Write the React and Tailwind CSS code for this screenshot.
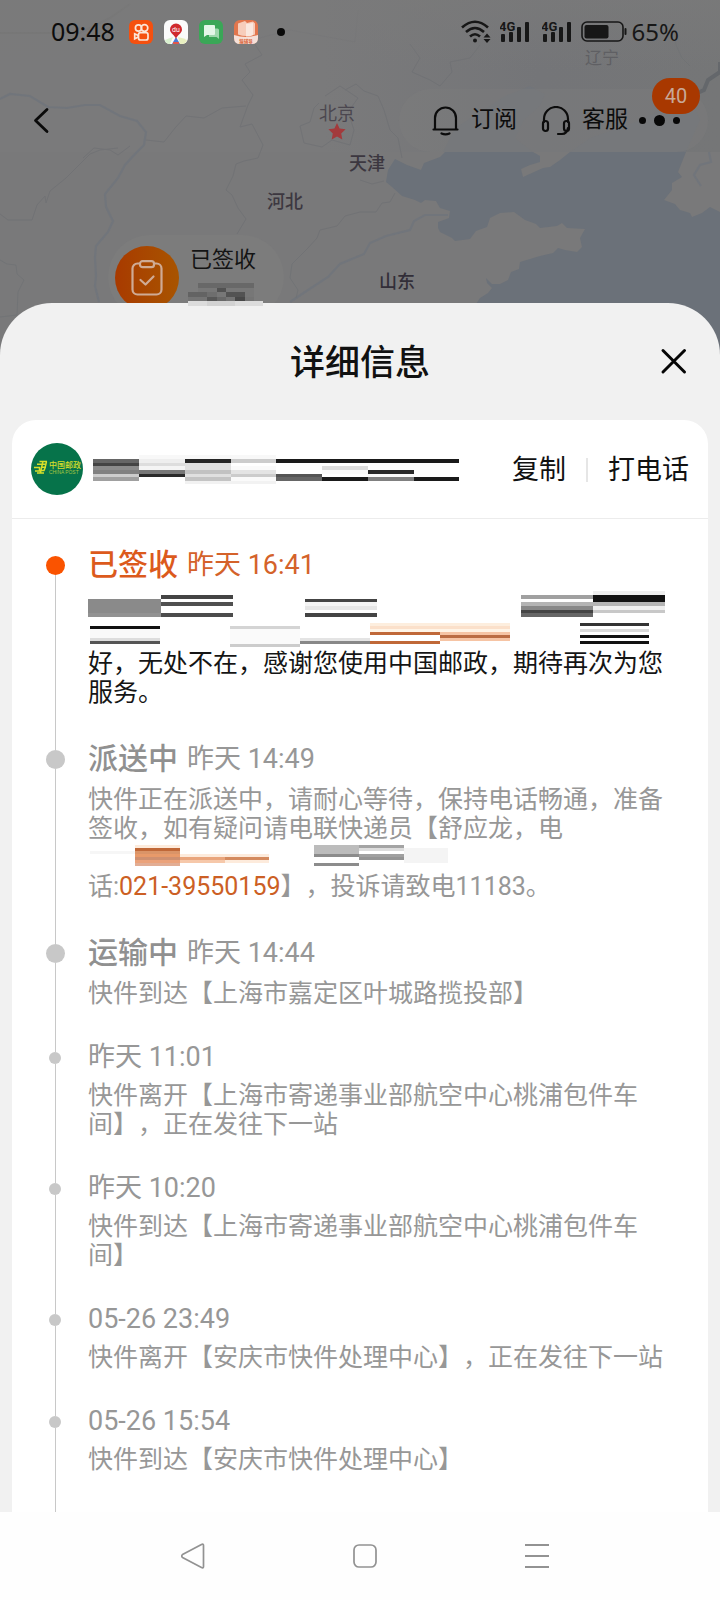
import React from "react";

const HEADER_MOSAIC = [
  [0, 4, 46, 4, "#666"], [0, 8, 46, 3, "#444"], [0, 11, 46, 4, "#8c8c8c"], [0, 15, 46, 4, "#808080"], [0, 19, 46, 3, "#ccc"], [0, 22, 46, 4, "#a0a0a0"],
  [46, 0, 137, 4, "#f8f8f8"], [46, 4, 46, 4, "#eee"], [46, 8, 46, 3, "#ddd"], [46, 11, 46, 4, "#f4f4f4"], [46, 15, 46, 4, "#777"], [46, 19, 46, 3, "#2a2a2a"],
  [92, 4, 46, 4, "#262626"], [92, 8, 46, 7, "#e0e0e0"], [92, 15, 46, 4, "#c2c2c2"], [92, 19, 46, 3, "#e0e0e0"], [92, 22, 46, 4, "#c4c4c4"], [92, 26, 46, 3, "#f2f2f2"],
  [138, 4, 45, 4, "#ccc"], [138, 11, 45, 4, "#fafafa"], [138, 15, 45, 4, "#e4e4e4"], [138, 19, 45, 3, "#ccc"], [138, 22, 45, 4, "#fafafa"], [138, 26, 45, 3, "#f2f2f2"],
  [183, 4, 183, 4, "#1a1a1a"], [183, 19, 46, 3, "#555"], [183, 22, 46, 4, "#666"],
  [229, 11, 46, 4, "#ddd"], [229, 15, 46, 4, "#fafafa"], [229, 22, 46, 4, "#1a1a1a"],
  [275, 15, 46, 4, "#2a2a2a"], [275, 19, 46, 3, "#fafafa"], [275, 22, 46, 4, "#808080"], [321, 22, 45, 4, "#1a1a1a"],
];

const SIGNED_MOSAIC = [
  [0, 8, 73, 14, "#8a8a8a"], [0, 22, 73, 4, "#929292"],
  [73, 4, 72, 4, "#444"], [73, 11, 72, 4, "#505050"], [73, 22, 72, 4, "#4c4c4c"],
  [217, 8, 72, 3, "#444"], [217, 11, 72, 4, "#f4f4f4"], [217, 15, 72, 4, "#e6e6e6"], [217, 22, 72, 4, "#444"],
  [433, 4, 72, 4, "#a0a0a0"], [433, 11, 72, 4, "#b4b4b4"], [433, 15, 72, 4, "#888"], [433, 19, 72, 3, "#444"], [433, 22, 72, 4, "#666"],
  [505, 0, 72, 4, "#eee"], [505, 4, 72, 7, "#111"], [505, 11, 72, 4, "#b4b4b4"], [505, 15, 72, 4, "#eee"], [505, 19, 72, 3, "#c8c8c8"],
  [2, 35, 70, 3, "#111"], [2, 38, 70, 9, "#f9f9f9"], [2, 47, 70, 3, "#ddd"], [2, 50, 70, 3, "#555"],
  [142, 35, 70, 3, "#d4d4d4"], [142, 38, 70, 15, "#fafafa"], [142, 53, 70, 3, "#ccc"],
  [212, 47, 70, 3, "#e4e4e4"], [212, 50, 70, 3, "#888"],
  [282, 32, 140, 3, "#fdeede"], [282, 35, 140, 3, "#fbe0ca"], [282, 38, 140, 3, "#fff4e6"],
  [282, 41, 70, 3, "#c06838"], [282, 50, 70, 3, "#c06838"],
  [352, 41, 70, 3, "#f6c4a4"], [352, 44, 70, 3, "#bb6c42"], [352, 47, 70, 3, "#f6c4a4"],
  [492, 32, 69, 3, "#333"], [492, 38, 69, 3, "#dadada"], [492, 44, 69, 3, "#111"], [492, 50, 69, 3, "#111"],
];

const COURIER_MOSAIC = [
  [2, 8, 45, 3, "#f6f6f6"],
  [47, 2, 45, 3, "#fdebdc"], [47, 5, 45, 3, "#c06838"], [47, 8, 45, 3, "#da9468"], [47, 11, 45, 3, "#e89a6a"], [47, 14, 45, 3, "#cf9070"], [47, 17, 45, 3, "#eba27a"], [47, 20, 45, 3, "#e2ad94"],
  [92, 11, 45, 3, "#fdebdc"], [92, 14, 45, 3, "#e9a57c"], [92, 17, 45, 3, "#f6c8aa"], [137, 11, 44, 9, "#fdebdc"], [137, 14, 44, 3, "#d48a5e"],
  [226, 2, 45, 9, "#bcbcbc"], [226, 11, 45, 3, "#8c8c8c"], [226, 20, 45, 3, "#8c8c8c"],
  [271, 2, 45, 3, "#a4a4a4"], [271, 5, 45, 3, "#ddd"], [271, 11, 45, 3, "#a0a0a0"], [271, 14, 45, 3, "#949494"],
  [316, 5, 44, 15, "#f4f4f4"],
];

const STATUS_MOSAIC = [
  [10, 0, 56, 5, "#686868"], [10, 5, 56, 4, "#777"], [29, 5, 9, 4, "#525252"],
  [0, 9, 66, 5, "#636363"], [19, 9, 10, 5, "#6e6e6e"], [29, 9, 9, 5, "#777"], [38, 9, 19, 5, "#535353"], [57, 9, 9, 5, "#777"],
  [0, 14, 66, 4, "#747474"], [19, 14, 10, 4, "#575757"], [29, 14, 9, 4, "#686868"], [47, 14, 10, 4, "#484848"],
  [0, 18, 75, 5, "#dcdcdc"], [19, 18, 28, 5, "#d2d2d2"],
];

function Mosaic({ cells, width, height, className = "" }) {
  return (
    <svg width={width} height={height} viewBox={`0 0 ${width} ${height}`} shapeRendering="crispEdges" className={`block max-w-full ${className}`} aria-hidden="true">
      {cells.map(([x, y, w, h, fill], i) => (
        <rect key={i} x={x} y={y} width={w} height={h} fill={fill} />
      ))}
    </svg>
  );
}

function MapBackdrop() {
  return (
    <div className="absolute inset-x-0 top-0 h-[360px] overflow-hidden bg-[#79797a]">
      <svg viewBox="0 0 720 360" preserveAspectRatio="xMidYMin slice" className="h-full w-full" aria-hidden="true">
        <defs>
          <linearGradient id="land" x1="0" y1="0" x2="1" y2="0">
            <stop offset="0.45" stopColor="#7a7a7b" />
            <stop offset="0.75" stopColor="#747578" />
            <stop offset="1" stopColor="#757677" />
          </linearGradient>
          <linearGradient id="fade" x1="0" y1="0" x2="0" y2="1">
            <stop offset="0" stopColor="#7a7a7a" />
            <stop offset="1" stopColor="#7a7a7a" stopOpacity="0" />
          </linearGradient>
        </defs>
        <rect width="720" height="360" fill="#79797a" />
        <rect width="720" height="152" fill="url(#land)" />
        <path fill="#6b7179" d="M445 152 440 157 424 163 421 170 407 165 395 159 388 170 386 182 392 187 402 196 415 200 421 203 425 200 436 201 440 208 450 211 449 218 438 222 438 228 440 232 452 238 455 241 470 239 476 231 487 227 490 218 500 213 514 212 525 220 536 224 540 228 557 226 562 223 567 228 585 229 580 238 582 247 577 252 565 250 558 248 553 253 540 256 520 262 519 269 511 272 508 280 500 284 492 284 486 278 487 283 492 288 488 293 480 298 476 304 470 320 440 360 720 360 720 212 710 207 702 213 692 217 690 213 680 210 675 204 664 200 672 190 672 183 682 177 678 172 686 152 570 152 560 160 550 167 543 168 523 177 521 169 530 165 540 162 540 156 533 152Z" />
        <path fill="#72757a" d="M443 152 455 128 480 112 505 96 530 86 545 94 540 106 524 120 515 138 533 152ZM570 152 590 138 640 120 690 96 700 120 686 152Z" />
        <g fill="none" stroke="#6d747c" strokeWidth="2.200" opacity=".7">
          <path d="M0 99 10 94 30 96 48 107 67 108 85 105 100 105 120 116 137 121 146 132 144 145 136 153 125 165 118 178 105 194 106 207 113 221 108 232 96 246 95 258 96 276 95 286 99 302" />
          <path d="M448 215 425 215 414 221 410 230 386 236 370 243 364 254 340 264 328 277 305 292 290 302" />
          <path d="M709 152 711 162 700 165 694 175 701 186" />
        </g>
        <path d="M720 62V72L708 80 704 90 695 94" fill="none" stroke="#64676b" strokeWidth="4" />
        <g fill="none" stroke="#6d6f73" strokeWidth="1" opacity=".6">
          <path d="M146 140 164 142 175 128 186 116 204 118 222 108 246 106" />
          <path d="M0 214 8 220 32 220 37 205 45 196 46 203 50 191 66 178 82 162 90 154 100 150 118 148" />
          <path d="M83 158 94 148 110 150 118 155 130 146" />
          <path d="M252 40 262 55 245 64 250 72 242 80 253 95 248 105 240 127 252 124 263 145 258 158 244 161 236 164 233 176 226 190 232 195 238 208 246 219 237 234" />
          <path d="M319 103 314 108 310 122 300 126 304 143 322 147 332 140 350 145 354 130 348 112 358 98 340 86 325 96" />
          <path d="M345 90 356 84 364 91 378 96 384 110 390 130 398 138 402 158" />
          <path d="M360 212 376 212 382 203 390 202 395 193M360 180 372 184 384 181" />
          <path d="M410 44 420 58 412 72 430 80 440 86 452 72 450 62 470 58 480 45" />
          <path d="M0 260 7 264 16 265 17 274 24 280 18 292 17 315 0 317" />
          <path d="M360 212 345 216 337 226 320 230 317 238 308 248 292 264 290 278 298 290 296 298" />
          <path d="M690 66 682 58 676 45 674 30" />
          <path d="M252 40 290 30 355 42 358 10" opacity=".4" />
        </g>
        <path d="M0 33H80L110 18 130 4" fill="none" stroke="#727272" strokeWidth="2" opacity=".6" />
        <path fill="#a33a3c" d="m337 123 2.600 5.500 6 .8-4.400 4.200 1.100 6-5.300-2.900-5.300 2.900 1.100-6-4.400-4.200 6-.8z" />
        <rect width="720" height="70" fill="url(#fade)" opacity=".7" />
      </svg>
      <span className="absolute left-[585px] top-[47px] text-[17px] leading-[22px] text-[#5f5f63]">辽宁</span>
      <span className="absolute left-[319px] top-[103px] text-[18px] leading-[22px] text-[#4b474f]">北京</span>
      <span className="absolute left-[349px] top-[153px] text-[18px] font-medium leading-[22px] text-[#3c3740]">天津</span>
      <span className="absolute left-[267px] top-[191px] text-[18px] font-medium leading-[22px] text-[#3c3740]">河北</span>
      <span className="absolute left-[379px] top-[271px] text-[18px] font-medium leading-[22px] text-[#322e38]">山东</span>
    </div>
  );
}

function Signal() {
  return (
    <svg width="30" height="24" viewBox="0 0 30 24" fill="#171717" aria-hidden="true">
      <text x="-1" y="10.500" fontSize="13" fontWeight="700" fontFamily="Roboto, sans-serif">4G</text>
      <rect x="1" y="14" width="4" height="8" rx="1" />
      <rect x="9" y="12" width="4" height="10" rx="1" />
      <rect x="17" y="7" width="4" height="15" rx="1" />
      <rect x="25" y="2" width="4" height="20" rx="1" />
    </svg>
  );
}

function StatusBar() {
  return (
    <div className="flex h-16 items-center pl-[51px] pr-[41px] font-['Noto_Sans',sans-serif] text-[25px] text-[#0c0c0c]">
      <span>09:48</span>
      <div className="ml-[14px] flex items-center gap-[11px]">
        <svg width="24" height="24" viewBox="0 0 24 24" fill="none" stroke="#fbe6da" strokeWidth="1.700" aria-hidden="true">
          <rect width="24" height="24" rx="6" fill="#f5500f" stroke="none" />
          <circle cx="9.500" cy="8" r="3.100" />
          <circle cx="15.500" cy="8" r="3.300" />
          <rect x="9.500" y="12.700" width="9.500" height="7.300" rx="2" />
          <path d="M9.300 15.500 5.700 13.800v5l3.600-1.700" />
        </svg>
        <svg width="24" height="24" viewBox="0 0 24 24" aria-hidden="true">
          <rect width="24" height="24" rx="6" fill="#fbfbfb" />
          <path d="M1 20q5-2 8-3l-3 7H5q-4-1-4-4z" fill="#d9f0cf" />
          <path d="M14 17q5 1 9 3-1 4-5 4h-2z" fill="#e8efc0" />
          <path d="m12 17 4 7H8z" fill="#4a7bd8" />
          <path d="M12 19c-1-4-6-5.500-6-9.500a6 6 0 0 1 12 0c0 4-5 5.500-6 9.500z" fill="#d02a2e" />
          <path d="M9 22h6v2H9z" fill="#e0584c" />
          <text x="12" y="12" textAnchor="middle" fontSize="7" fill="#fff" fontFamily="Roboto, sans-serif">du</text>
        </svg>
        <svg width="24" height="24" viewBox="0 0 24 24" aria-hidden="true">
          <rect width="24" height="24" rx="6" fill="#3aa757" />
          <path d="M10 8.500h8.500a1.500 1.500 0 0 1 1.500 1.500v9l-2.500-2H10z" fill="#9fd8ad" />
          <path d="M6 5h9a1 1 0 0 1 1 1v8a1 1 0 0 1-1 1H8l-3 2V6a1 1 0 0 1 1-1z" fill="#e3f6e7" />
        </svg>
        <svg width="24" height="24" viewBox="0 0 24 24" aria-hidden="true">
          <rect width="24" height="24" rx="6" fill="#e2764d" />
          <path d="M0 15q12 4 24 0v3q0 6-6 6H6q-6 0-6-6z" fill="#f6e0d8" />
          <path d="M4 3.500 11 1l2 2 6-1.500 2 2v11q-9 3-17 0z" fill="#f7cdbb" />
          <path d="M12 4v12.500q4 0 7-1.500V3z" fill="#fae8df" />
          <text x="12" y="22.500" textAnchor="middle" fontSize="4.500" fontWeight="700" fill="#d9663c" fontFamily="'Noto Sans CJK SC', sans-serif">猿辅导</text>
        </svg>
      </div>
      <span className="ml-[19px] size-2 rounded-full bg-[#0a0a0a]" />
      <div className="ml-auto flex items-center">
        <svg width="30" height="24" viewBox="0 0 30 24" fill="none" stroke="#171717" strokeWidth="2.600" className="mr-[9px]" aria-hidden="true">
          <path d="M1 7.500q13-11.500 26 0M5 12q9-8 18 0M9 16.500q5-4.500 10 0" />
          <circle cx="14" cy="20.500" r="2" fill="#171717" stroke="none" />
          <path d="m26 13.500 3.500 4h-7zM26 23l3.500-4h-7z" fill="#171717" stroke="none" />
        </svg>
        <Signal />
        <span className="w-3" />
        <Signal />
        <svg width="46" height="22" viewBox="0 0 46 22" className="ml-[9px]" aria-hidden="true">
          <rect x="1" y="1" width="41" height="19" rx="5" fill="none" stroke="#171717" strokeWidth="1.600" />
          <rect x="3.500" y="4" width="24" height="13.500" rx="2" fill="#171717" />
          <rect x="43.500" y="7" width="2" height="7" rx="1" fill="#171717" />
        </svg>
        <span className="ml-[5px] text-[24px] text-[#171717]">65%</span>
      </div>
    </div>
  );
}

function TopActions() {
  return (
    <div className="mt-[25px] flex h-[63px] items-center justify-between pl-[31px] pr-3">
      <button type="button" aria-label="返回" className="flex h-8 w-5 items-center justify-center">
        <svg width="20" height="28" viewBox="0 0 20 28" fill="none" stroke="#0a0a0a" strokeWidth="2.800" strokeLinecap="round" strokeLinejoin="round" aria-hidden="true">
          <path d="M16 2.500 4.500 13.500 16 24.500" />
        </svg>
      </button>
      <div className="relative flex h-full items-center rounded-full bg-[#7e7e7e]/40 pl-[33px] pr-[28px] text-[23px] text-[#0c0c0c]">
        <button type="button" className="flex items-center gap-3">
          <svg width="27" height="30" viewBox="0 0 27 30" fill="none" stroke="#0c0c0c" strokeWidth="2.200" strokeLinecap="round" strokeLinejoin="round" aria-hidden="true">
            <path d="M1.500 23.500h24M3 23.500V12a10.500 10.500 0 0 1 21 0v11.500M9.500 27.500q4 1.800 8 0" />
          </svg>
          <span>订阅</span>
        </button>
        <button type="button" className="ml-6 flex items-center gap-[11px]">
          <svg width="30" height="30" viewBox="0 0 30 30" fill="none" stroke="#0c0c0c" strokeWidth="2.200" strokeLinecap="round" strokeLinejoin="round" aria-hidden="true">
            <path d="M3 16v-3a12 12 0 0 1 24 0v3M27 22q-1 6-6 6h-4" />
            <rect x="2" y="15" width="5" height="10" rx="2.500" />
            <rect x="23" y="15" width="5" height="10" rx="2.500" />
          </svg>
          <span>客服</span>
        </button>
        <button type="button" aria-label="更多" className="ml-[11px] flex items-center gap-2">
          <span className="size-[7px] rounded-full bg-[#080808]" />
          <span className="size-[11px] rounded-full bg-[#080808]" />
          <span className="size-[7px] rounded-full bg-[#080808]" />
        </button>
        <span className="absolute -top-[11px] right-2 flex h-9 w-12 items-center justify-center rounded-full bg-[#a83800] font-['Roboto',sans-serif] text-[20px] text-[#c8a998]">40</span>
      </div>
    </div>
  );
}

function StatusCard() {
  return (
    <div className="ml-[108px] mt-[83px] flex h-[84px] w-44 items-start gap-[9px] rounded-full bg-[#7c7c7c] pl-[7px] pt-[11px]">
      <div className="flex size-16 shrink-0 items-center justify-center rounded-full bg-linear-to-r from-[#a83a00] to-[#a85400]">
        <svg width="32" height="36" viewBox="0 0 32 36" fill="none" stroke="#cfab95" strokeWidth="2.200" strokeLinecap="round" strokeLinejoin="round" aria-hidden="true">
          <path d="M9 3.500H6.500a5 5 0 0 0-5 5v21a5 5 0 0 0 5 5h19a5 5 0 0 0 5-5v-21a5 5 0 0 0-5-5H23" />
          <rect x="9" y="1.200" width="14" height="6" rx="2.500" />
          <path d="m9.500 20 5 4.500 8-8" />
        </svg>
      </div>
      <div className="text-[22px] leading-7 text-[#141414]">
        <div className="pl-0.5">已签收</div>
        <Mosaic cells={STATUS_MOSAIC} width={75} height={23} className="relative z-20 mt-[9px]" />
      </div>
    </div>
  );
}

function PostLogo() {
  return (
    <svg width="52" height="52" viewBox="0 0 52 52" className="shrink-0" role="img" aria-label="中国邮政">
      <circle cx="26" cy="26" r="26" fill="#06734a" />
      <g fill="none" stroke="#d6df2a" strokeWidth="1.500">
        <path d="M8.500 18.500H16M6 21.200h9.500M3 24.500h5.500V28H4M10.500 24.200H15M6 30h7M12 18 9.500 29.500M15.500 18.500 14 25l-1 2.500h-3" />
      </g>
      <text x="18" y="25" fontSize="8" fontWeight="500" fill="#d6df2a" fontFamily="'Noto Sans CJK SC', sans-serif">中国邮政</text>
      <text x="18" y="30.500" fontSize="4.900" fill="#a9c83f" fontFamily="'Liberation Sans', sans-serif">CHINA POST</text>
    </svg>
  );
}

const EVENTS = [
  {
    status: "已签收",
    time: "昨天 16:41",
    active: true,
    body: (
      <>
        <Mosaic cells={SIGNED_MOSAIC} width={577} height={58} />
        好，无处不在，感谢您使用中国邮政，期待再次为您服务。
      </>
    ),
  },
  {
    status: "派送中",
    time: "昨天 14:49",
    body: (
      <>
        快件正在派送中，请耐心等待，保持电话畅通，准备签收，如有疑问请电联快递员【舒应龙，电
        <Mosaic cells={COURIER_MOSAIC} width={577} height={29} />
        话:<a href="tel:02139550159" className="text-[#cc5f24]">021-39550159</a>】，投诉请致电11183。
      </>
    ),
  },
  { status: "运输中", time: "昨天 14:44", body: "快件到达【上海市嘉定区叶城路揽投部】" },
  { time: "昨天 11:01", body: "快件离开【上海市寄递事业部航空中心桃浦包件车间】，正在发往下一站" },
  { time: "昨天 10:20", body: "快件到达【上海市寄递事业部航空中心桃浦包件车间】" },
  { time: "05-26 23:49", body: "快件离开【安庆市快件处理中心】，正在发往下一站" },
  { time: "05-26 15:54", body: "快件到达【安庆市快件处理中心】" },
  { time: "05-26 11:28" },
];

function TimelineEvent({ event, first }) {
  const { status, time, active, body } = event;
  return (
    <li className="flex">
      <div className="ml-[33px] mr-[22px] flex w-5 shrink-0 flex-col items-center">
        <span className={`w-px ${status ? "h-3" : "h-[13px]"} ${first ? "bg-transparent" : "bg-[#c8c8c8]"}`} />
        <span className={`rounded-full ${status ? "size-[19px]" : "size-3"} ${active ? "bg-[#fa5300]" : "bg-[#c8c8c8]"}`} />
        <span className="w-px flex-1 bg-[#c8c8c8]" />
      </div>
      <div className="min-w-0 flex-1 pb-[31px] pl-px pr-[43px]">
        <div className={`flex items-center gap-[9px] text-[27px] ${status ? "h-[41px]" : "h-9"} ${active ? "text-[#d4622a]" : "text-[#979797]"}`}>
          {status && <strong className={`text-[30px] font-medium leading-[41px] ${active ? "text-[#dc5a1c]" : "text-[#909090]"}`}>{status}</strong>}
          <time className="leading-9">{time}</time>
        </div>
        {body && <div className={`mt-[6px] text-[25px] leading-[29px] ${active ? "text-[#151515]" : "text-[#979797]"}`}>{body}</div>}
      </div>
    </li>
  );
}

function DetailSheet() {
  return (
    <section className="relative z-10 -mt-4 flex min-h-0 flex-1 flex-col rounded-t-[52px] bg-[#f1f1f1] px-3">
      <header className="relative flex h-[117px] shrink-0 items-center justify-center">
        <h1 className="pt-1 text-[35px] font-medium leading-none text-[#111]">详细信息</h1>
        <button type="button" aria-label="关闭" className="absolute right-[18px] flex size-8 items-center justify-center">
          <svg width="28" height="28" viewBox="0 0 28 28" stroke="#050505" strokeWidth="3" strokeLinecap="round" aria-hidden="true">
            <path d="m3 2.500 21.500 21.500m0-21.500-21.500 21.500" />
          </svg>
        </button>
      </header>
      <div className="flex min-h-0 flex-1 flex-col overflow-hidden rounded-t-3xl bg-white">
        <div className="flex h-[99px] shrink-0 items-center border-b border-[#ececec] pl-[19px] pr-[19px] text-[27px] text-[#111]">
          <PostLogo />
          <Mosaic cells={HEADER_MOSAIC} width={366} height={29} className="ml-[10px]" />
          <div className="ml-auto flex items-center pt-0.5">
            <button type="button">复制</button>
            <span className="mx-5 h-6 w-0.5 bg-[#e6e6e6]" />
            <button type="button">打电话</button>
          </div>
        </div>
        <ol className="min-h-0 flex-1 overflow-hidden pt-[25px]">
          {EVENTS.map((event, i) => (
            <TimelineEvent key={event.time} event={event} first={i === 0} />
          ))}
        </ol>
      </div>
    </section>
  );
}

function SystemNav() {
  return (
    <nav className="relative z-10 flex h-[88px] shrink-0 items-center justify-center gap-[148px] bg-[#fefefe] pl-[10px]">
      <button type="button" aria-label="返回">
        <svg width="24" height="26" viewBox="0 0 24 26" fill="none" stroke="#929292" strokeWidth="1.700" strokeLinejoin="round" aria-hidden="true">
          <path d="M1.500 11.500 20.500 1.500q2-1 2 1v21q0 2-2 1L1.500 14.500q-1.500-1.500 0-3z" />
        </svg>
      </button>
      <button type="button" aria-label="主页">
        <svg width="24" height="26" viewBox="0 0 24 26" fill="none" stroke="#929292" strokeWidth="1.700" aria-hidden="true">
          <rect x="1" y="2" width="22" height="22" rx="5" />
        </svg>
      </button>
      <button type="button" aria-label="最近任务">
        <svg width="24" height="26" viewBox="0 0 24 26" stroke="#929292" strokeWidth="2" aria-hidden="true">
          <path d="M0 2h24M0 13h24M0 24h24" />
        </svg>
      </button>
    </nav>
  );
}

export default function App() {
  return (
    <main className="relative flex h-screen flex-col overflow-hidden bg-[#f1f1f1] font-['Roboto','Noto_Sans_CJK_SC',sans-serif] [text-spacing-trim:space-all]">
      <MapBackdrop />
      <div className="relative shrink-0">
        <StatusBar />
        <TopActions />
        <StatusCard />
      </div>
      <DetailSheet />
      <SystemNav />
    </main>
  );
}
